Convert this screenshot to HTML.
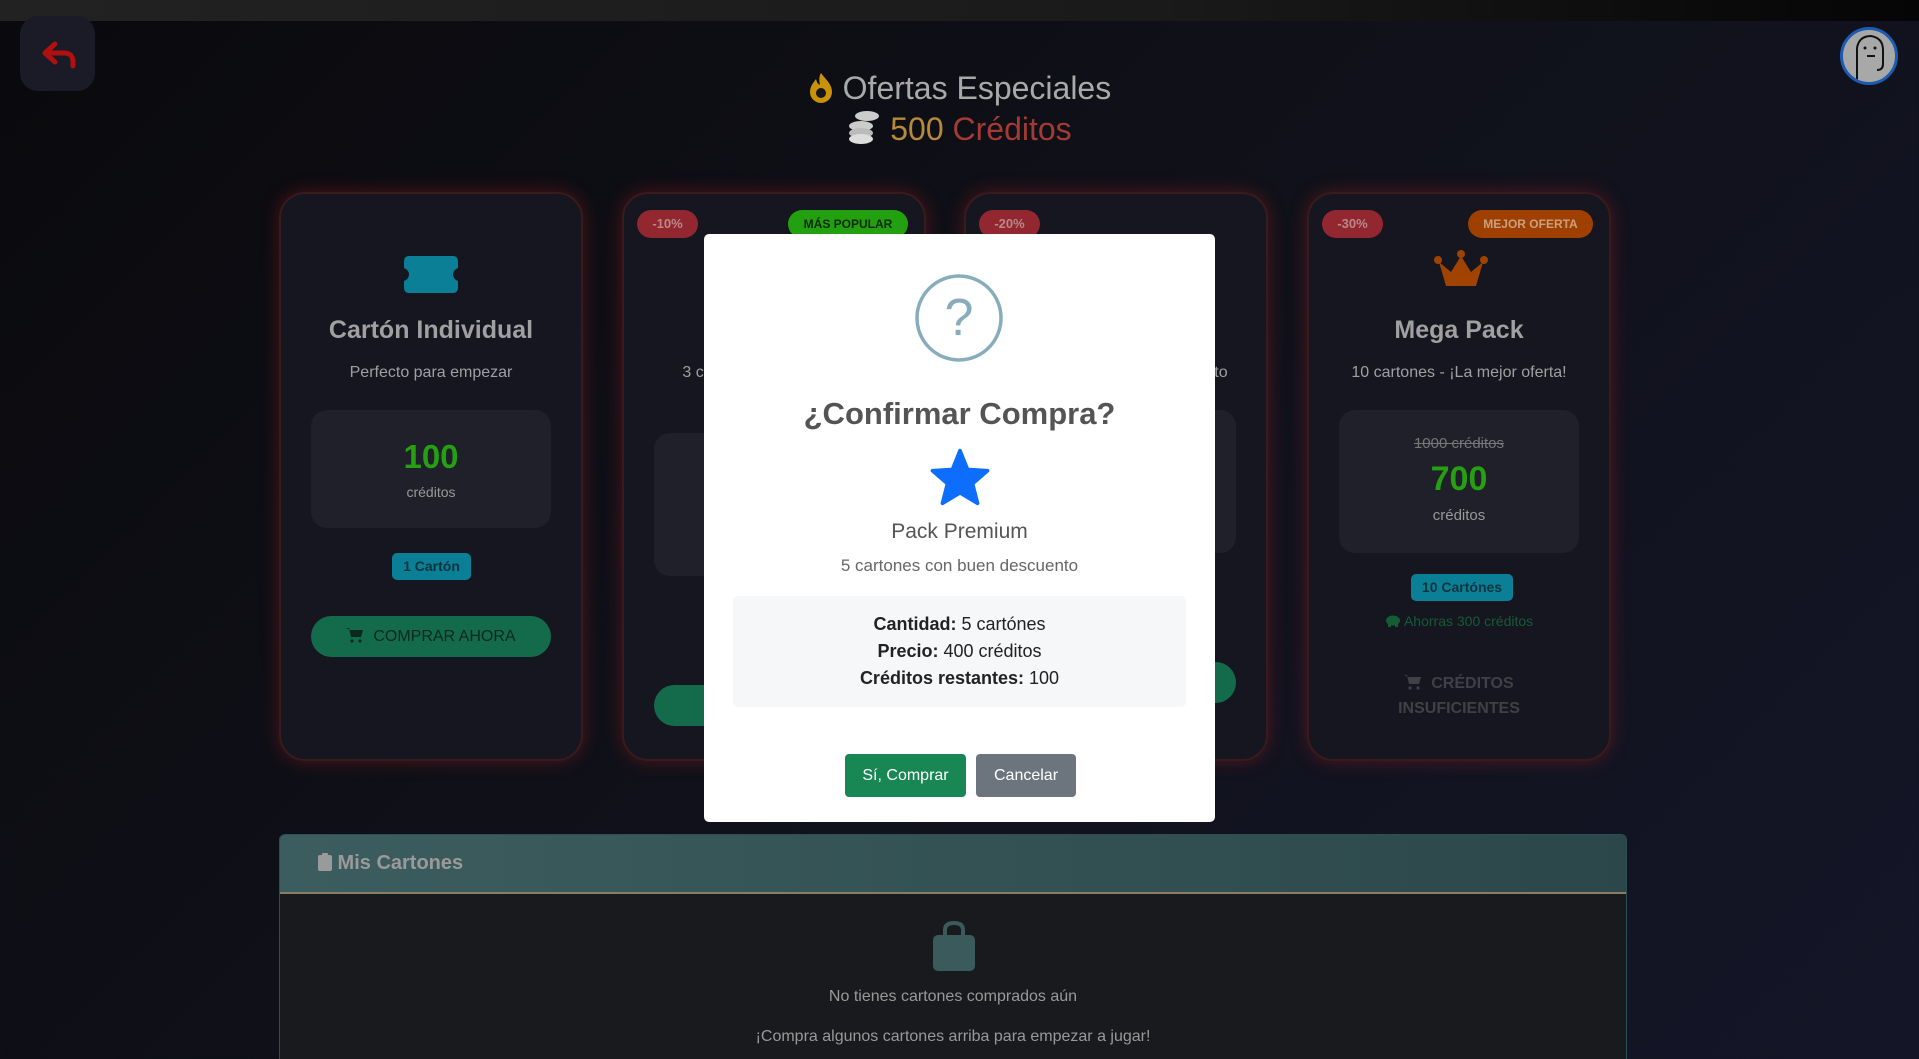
<!DOCTYPE html>
<html><head><meta charset="utf-8"><style>
*{box-sizing:border-box;margin:0;padding:0}
html,body{width:1919px;height:1059px;overflow:hidden}
body{background:linear-gradient(135deg,#0a0a0d 0%,#10111a 50%,#141628 100%);font-family:"Liberation Sans","DejaVu Sans",sans-serif;position:relative;color:#aaa}
.top{position:absolute;left:0;top:0;width:1919px;height:21px;background:linear-gradient(90deg,#222 0%,#1a1a1a 60%,#050505 100%)}
.back{position:absolute;left:20px;top:16px;width:75px;height:75px;border-radius:18px;background:#1a1b26}
.av{position:absolute;left:1840px;top:27px;width:58px;height:58px;border-radius:50%;background:#a8a8a8;border:3px solid #1d5bb0;overflow:hidden}
.h1{position:absolute;left:0;width:1919px;text-align:center;top:70px;font-size:32px;color:#a9a9a9}
.h2{position:absolute;left:0;width:1919px;text-align:center;top:108px;font-size:32px}
.card{position:absolute;top:192px;width:304px;height:569px;border-radius:26px;background:#15161f;border:2px solid #3a1a1c;box-shadow:0 0 18px rgba(150,30,30,.45)}
.badge{position:absolute;top:16px;height:28px;border-radius:14px;font-size:13px;font-weight:bold;line-height:28px;text-align:center}
.ct{position:absolute;left:0;width:100%;text-align:center}
.pbox{position:absolute;left:30px;width:240px;border-radius:16px;background:#1f2029}
.btn{position:absolute;left:30px;width:240px;height:41px;border-radius:21px;background:#146b4c;color:#0b2a1d;font-size:16px;text-align:center;line-height:41px}
.modal{position:absolute;left:704px;top:234px;width:511px;height:588px;background:#fff;border-radius:5px}
.mis{position:absolute;left:279px;top:834px;width:1348px;height:226px;border:1px solid #2d4e52;border-bottom:none;border-radius:6px 6px 0 0;background:#181a1e;overflow:hidden}
.mh{height:59px;background:linear-gradient(90deg,#3c5d5f,#2c4749);border-bottom:2px solid #8a7d66;font-size:20px;font-weight:bold;color:#9a9a9a;padding:17px 0 0 38px}
.cart{display:inline-block;vertical-align:-2px}
</style></head><body>
<div class="top"></div>
<div class="back"><svg width="75" height="75" viewBox="0 0 75 75"><path d="M25 37 L35 28 M25 37 L35 46 M26 37 H44 Q53 37 53 46 V50" fill="none" stroke="#b01010" stroke-width="5" stroke-linecap="round" stroke-linejoin="round"/></svg></div>
<div class="av"><svg width="52" height="52" viewBox="0 0 52 52"><path d="M14 52 V18 Q16 6 28 6 Q40 8 40 20 V34 Q40 40 34 40" fill="none" stroke="#111" stroke-width="2"/><circle cx="22" cy="18" r="1.5" fill="#111"/><circle cx="32" cy="18" r="1.5" fill="#111"/><path d="M24 26 H32" stroke="#111" stroke-width="2"/></svg></div>
<div class="h1"><svg width="26" height="32" viewBox="0 0 26 32" style="vertical-align:-4px"><path d="M13 2 C18 9 24 13 24 21 A11 11 0 0 1 2 21 C2 15 6 11 8 8 C9 12 10 13 12 14 C11 9 11 5 13 2Z" fill="#c8930a"/><circle cx="13" cy="22" r="5" fill="#16161f"/></svg> Ofertas Especiales</div>
<div class="h2"><svg width="34" height="36" viewBox="0 0 34 36" style="vertical-align:-4px"><ellipse cx="20" cy="8" rx="12" ry="5" fill="#ccc"/><ellipse cx="14" cy="18" rx="12" ry="5" fill="#ccc"/><ellipse cx="14" cy="25" rx="12" ry="5" fill="#bbb"/><ellipse cx="14" cy="31" rx="12" ry="5" fill="#ddd"/></svg> <span style="color:#b78a3a">500</span> <span style="color:#a33a33">Créditos</span></div>

<div class="card" style="left:279px">
 <svg style="position:absolute;left:122px;top:62px" width="56" height="37" viewBox="0 0 56 37"><path d="M6 0 H50 Q55 0 55 6 V12 Q50 14 50 18.5 Q50 23 55 25 V31 Q55 37 50 37 H6 Q1 37 1 31 V25 Q6 23 6 18.5 Q6 14 1 12 V6 Q1 0 6 0Z" fill="#0b7f96"/></svg>
 <div class="ct" style="top:122px;font-size:25px;font-weight:bold;color:#a0a0a0">Cartón Individual</div>
 <div class="ct" style="top:170px;font-size:16px;color:#a0a0a0">Perfecto para empezar</div>
 <div class="pbox" style="top:216px;height:118px"><div class="ct" style="top:28px;font-size:33px;font-weight:bold;color:#26a012">100</div><div class="ct" style="top:74px;font-size:14px;color:#999">créditos</div></div>
 <div style="position:absolute;left:111px;top:359px;width:79px;height:27px;border-radius:5px;background:#0b7f96;color:#0a3540;font-size:14px;font-weight:bold;text-align:center;line-height:27px">1 Cartón</div>
 <div class="btn" style="top:422px"><svg class="cart" width="18" height="16" viewBox="0 0 18 16"><path d="M0 1 H3 L5 10 H15 L17 3 H4" fill="#0b2a1d"/><circle cx="6" cy="14" r="1.6" fill="#0b2a1d"/><circle cx="14" cy="14" r="1.6" fill="#0b2a1d"/></svg>&nbsp; COMPRAR AHORA</div>
</div>
<div class="card" style="left:622px">
 <div class="badge" style="left:13px;width:61px;background:#92272f;color:#b88">-10%</div>
 <div class="badge" style="left:164px;width:120px;background:#22a010;color:#0c2a08;font-size:12px">MÁS POPULAR</div>
 <div class="ct" style="top:170px;font-size:16px;color:#a0a0a0">3 cartones con descuento</div>
 <div class="pbox" style="top:239px;height:143px"></div>
 <div class="btn" style="top:491px"></div>
</div>
<div class="card" style="left:964px">
 <div class="badge" style="left:13px;width:61px;background:#92272f;color:#b88">-20%</div>
 <div class="ct" style="top:170px;font-size:16px;color:#a0a0a0">5 cartones con buen descuento</div>
 <div class="pbox" style="top:216px;height:143px"></div>
 <div class="btn" style="top:468px"></div>
</div>
<div class="card" style="left:1307px">
 <div class="badge" style="left:13px;width:61px;background:#92272f;color:#b88">-30%</div>
 <div class="badge" style="left:159px;width:125px;background:#a04000;color:#c9a080;font-size:12px">MEJOR OFERTA</div>
 <svg style="position:absolute;left:124px;top:56px" width="56" height="40" viewBox="0 0 56 40"><path d="M6 12 L13 36 H43 L50 12 L38 22 L28 6 L18 22Z" fill="#a04300"/><circle cx="5" cy="10" r="4" fill="#a04300"/><circle cx="51" cy="10" r="4" fill="#a04300"/><circle cx="28" cy="4" r="4" fill="#a04300"/></svg>
 <div class="ct" style="top:122px;font-size:25px;font-weight:bold;color:#a0a0a0">Mega Pack</div>
 <div class="ct" style="top:170px;font-size:16px;color:#a0a0a0">10 cartones - ¡La mejor oferta!</div>
 <div class="pbox" style="top:216px;height:143px"><div class="ct" style="top:25px;font-size:15px;color:#777;text-decoration:line-through">1000 créditos</div><div class="ct" style="top:50px;font-size:34px;font-weight:bold;color:#26a012">700</div><div class="ct" style="top:97px;font-size:15px;color:#999">créditos</div></div>
 <div style="position:absolute;left:102px;top:380px;width:102px;height:27px;border-radius:5px;background:#0b7f96;color:#0a3540;font-size:14px;font-weight:bold;text-align:center;line-height:27px">10 Cartónes</div>
 <div class="ct" style="top:419px;font-size:14px;color:#155c35"><svg width="16" height="13" viewBox="0 0 16 13" style="vertical-align:-1px"><ellipse cx="8" cy="6.5" rx="7" ry="5" fill="#155c35"/><rect x="3" y="9" width="3" height="4" fill="#155c35"/><rect x="10" y="9" width="3" height="4" fill="#155c35"/></svg> Ahorras 300 créditos</div>
 <div class="ct" style="top:477px;font-size:16px;font-weight:bold;color:#404046;line-height:25px"><svg class="cart" width="18" height="16" viewBox="0 0 18 16"><path d="M0 1 H3 L5 10 H15 L17 3 H4" fill="#404046"/><circle cx="6" cy="14" r="1.6" fill="#404046"/><circle cx="14" cy="14" r="1.6" fill="#404046"/></svg>&nbsp; CRÉDITOS<br>INSUFICIENTES</div>
</div>

<div class="mis"><div class="mh"><svg width="14" height="18" viewBox="0 0 14 18" style="vertical-align:-2px"><rect x="0" y="2" width="14" height="16" rx="2" fill="#9a9a9a"/><rect x="4" y="0" width="6" height="4" rx="1" fill="#9a9a9a"/></svg> Mis Cartones</div>
 <svg style="position:absolute;left:651px;top:86px" width="46" height="50" viewBox="0 0 46 50"><path d="M14 14 V9 Q14 2 23 2 Q32 2 32 9 V14" fill="none" stroke="#3a5a5c" stroke-width="4"/><rect x="2" y="14" width="42" height="36" rx="5" fill="#3a5a5c"/></svg>
 <div class="ct" style="top:153px;font-size:16px;color:#999">No tienes cartones comprados aún</div>
 <div class="ct" style="top:193px;font-size:16px;color:#999">¡Compra algunos cartones arriba para empezar a jugar!</div>
</div>

<div class="modal">
 <svg style="position:absolute;left:210px;top:39px" width="90" height="90" viewBox="0 0 90 90"><circle cx="45" cy="45" r="42" fill="none" stroke="#87adbd" stroke-width="3.5"/><text x="45" y="62" text-anchor="middle" font-size="52" fill="#87adbd" font-family="Liberation Sans">?</text></svg>
 <div class="ct" style="top:162px;font-size:31px;font-weight:bold;color:#545454">¿Confirmar Compra?</div>
 <svg style="position:absolute;left:226px;top:214px" width="60" height="58" viewBox="0 0 24 23"><path d="M12 1 L15 8.5 L23 9 L17 14.2 L19 22 L12 17.8 L5 22 L7 14.2 L1 9 L9 8.5Z" fill="#0d6efd" stroke="#0d6efd" stroke-linejoin="round" stroke-width="1.5"/></svg>
 <div class="ct" style="top:286px;font-size:21px;color:#555">Pack Premium</div>
 <div class="ct" style="top:322px;font-size:17px;color:#666">5 cartones con buen descuento</div>
 <div style="position:absolute;left:29px;top:362px;width:453px;height:111px;background:#f6f7f9;border-radius:5px;font-size:18px;color:#222;text-align:center;line-height:27px;padding-top:15px"><b>Cantidad:</b> 5 cartónes<br><b>Precio:</b> 400 créditos<br><b>Créditos restantes:</b> 100</div>
 <div style="position:absolute;left:141px;top:520px;width:121px;height:43px;background:#198754;border-radius:4px;color:#fff;font-size:16px;text-align:center;line-height:43px">Sí, Comprar</div>
 <div style="position:absolute;left:272px;top:520px;width:100px;height:43px;background:#6c757d;border-radius:4px;color:#fff;font-size:16px;text-align:center;line-height:43px">Cancelar</div>
</div>
</body></html>
